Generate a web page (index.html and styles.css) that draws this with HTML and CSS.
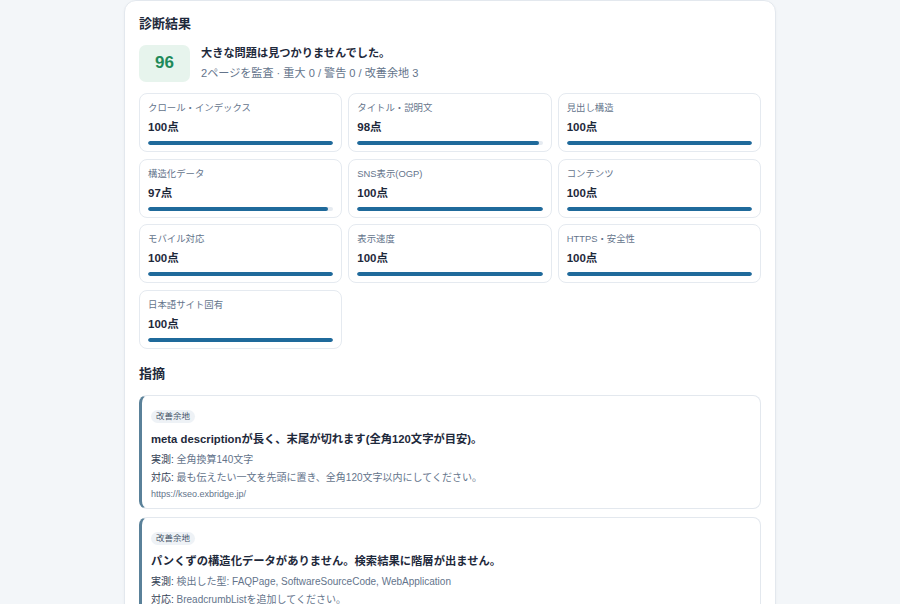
FILE: index.html
```html
<!DOCTYPE html>
<html lang="ja">
<head>
<meta charset="utf-8">
<title>診断結果</title>
<link rel="stylesheet" href="styles.css">
</head>
<body>
<main class="panel">
  <h2 class="heading">診断結果</h2>
  <div class="summary">
    <div class="score">96</div>
    <div class="summary-text">
      <div class="summary-main">大きな問題は見つかりませんでした。</div>
      <div class="summary-sub">2ページを監査 · 重大 0 / 警告 0 / 改善余地 3</div>
    </div>
  </div>

  <div class="grid">
    <div class="cat"><div class="cat-label">クロール・インデックス</div><div class="cat-value">100点</div><div class="track"><div class="fill" style="width:100%"></div></div></div>
    <div class="cat"><div class="cat-label">タイトル・説明文</div><div class="cat-value">98点</div><div class="track"><div class="fill" style="width:98%"></div></div></div>
    <div class="cat"><div class="cat-label">見出し構造</div><div class="cat-value">100点</div><div class="track"><div class="fill" style="width:100%"></div></div></div>
    <div class="cat"><div class="cat-label">構造化データ</div><div class="cat-value">97点</div><div class="track"><div class="fill" style="width:97%"></div></div></div>
    <div class="cat"><div class="cat-label">SNS表示(OGP)</div><div class="cat-value">100点</div><div class="track"><div class="fill" style="width:100%"></div></div></div>
    <div class="cat"><div class="cat-label">コンテンツ</div><div class="cat-value">100点</div><div class="track"><div class="fill" style="width:100%"></div></div></div>
    <div class="cat"><div class="cat-label">モバイル対応</div><div class="cat-value">100点</div><div class="track"><div class="fill" style="width:100%"></div></div></div>
    <div class="cat"><div class="cat-label">表示速度</div><div class="cat-value">100点</div><div class="track"><div class="fill" style="width:100%"></div></div></div>
    <div class="cat"><div class="cat-label">HTTPS・安全性</div><div class="cat-value">100点</div><div class="track"><div class="fill" style="width:100%"></div></div></div>
    <div class="cat"><div class="cat-label">日本語サイト固有</div><div class="cat-value">100点</div><div class="track"><div class="fill" style="width:100%"></div></div></div>
  </div>

  <h2 class="heading section">指摘</h2>

  <div class="issues">
    <div class="issue">
      <span class="tag">改善余地</span>
      <div class="issue-title">meta descriptionが長く、末尾が切れます(全角120文字が目安)。</div>
      <div class="issue-line"><span class="key">実測:</span> 全角換算140文字</div>
      <div class="issue-line"><span class="key">対応:</span> 最も伝えたい一文を先頭に置き、全角120文字以内にしてください。</div>
      <div class="issue-url">https://kseo.exbridge.jp/</div>
    </div>
    <div class="issue">
      <span class="tag">改善余地</span>
      <div class="issue-title">パンくずの構造化データがありません。検索結果に階層が出ません。</div>
      <div class="issue-line"><span class="key">実測:</span> 検出した型: FAQPage, SoftwareSourceCode, WebApplication</div>
      <div class="issue-line"><span class="key">対応:</span> BreadcrumbListを追加してください。</div>
      <div class="issue-url">https://kseo.exbridge.jp/</div>
    </div>
  </div>
</main>
</body>
</html>
```
FILE: styles.css
```css
* { box-sizing: border-box; }

html, body {
  margin: 0;
  padding: 0;
  background: #f3f6f9;
  font-family: "Liberation Sans", "Noto Sans CJK JP", sans-serif;
  color: #1e293b;
}

body { overflow: hidden; height: 604px; }

.panel {
  width: 652px;
  margin: 0 auto;
  background: #ffffff;
  border: 1px solid #e3e8ee;
  border-radius: 12px;
  padding: 14px 14px 20px;
  box-shadow: 0 1px 3px rgba(15, 23, 42, 0.04);
}

.heading {
  margin: 0;
  font-size: 13px;
  line-height: 18px;
  font-weight: 700;
  color: #1e293b;
}

.heading.section { margin-top: 16px; }

.summary {
  display: flex;
  align-items: center;
  gap: 11px;
  margin-top: 10px;
}

.score {
  width: 51px;
  height: 37px;
  border-radius: 7px;
  background: #e7f4ed;
  color: #1f8a5a;
  font-size: 17px;
  font-weight: 700;
  display: flex;
  align-items: center;
  justify-content: center;
}

.summary-main {
  font-size: 11.2px;
  line-height: 20px;
  font-weight: 700;
  color: #1e293b;
}

.summary-sub {
  font-size: 11.1px;
  line-height: 20px;
  color: #64748b;
}

.grid {
  display: grid;
  grid-template-columns: repeat(3, 1fr);
  gap: 6.5px 6px;
  margin-top: 10px;
}

.cat {
  border: 1px solid #e5eaf0;
  border-radius: 8px;
  padding: 7px 8px 6px;
  background: #fff;
}

.cat-label {
  font-size: 9.4px;
  line-height: 14px;
  color: #64748b;
}

.cat-value {
  margin-top: 4px;
  font-size: 11.5px;
  line-height: 16px;
  font-weight: 700;
  color: #1e293b;
}

.track {
  margin-top: 6px;
  height: 4px;
  border-radius: 2px;
  background: #e6ebf1;
  overflow: hidden;
}

.fill {
  height: 100%;
  border-radius: 2px;
  background: #1f6a9b;
}

.issues {
  display: flex;
  flex-direction: column;
  gap: 8px;
  margin-top: 12px;
}

.issue {
  display: flex;
  flex-direction: column;
  align-items: flex-start;
  border: 1px solid #e3e8ee;
  border-left: 3px solid #5a8199;
  border-radius: 8px;
  padding: 14px 12px 7px 9px;
  background: #fff;
}

.tag {
  display: block;
  height: 13px;
  line-height: 13px;
  padding: 0 5px;
  border-radius: 7px;
  background: #eef2f6;
  color: #475569;
  font-size: 8.5px;
}

.issue-title {
  margin-top: 8px;
  font-size: 11.3px;
  line-height: 16px;
  font-weight: 700;
  color: #1e293b;
}

.issue-line {
  font-size: 10px;
  line-height: 18px;
  color: #64748b;
}

.issue-title + .issue-line { margin-top: 4px; }

.key { color: #334155; }

.issue-url {
  font-size: 9px;
  line-height: 14px;
  color: #64748b;
}
```
